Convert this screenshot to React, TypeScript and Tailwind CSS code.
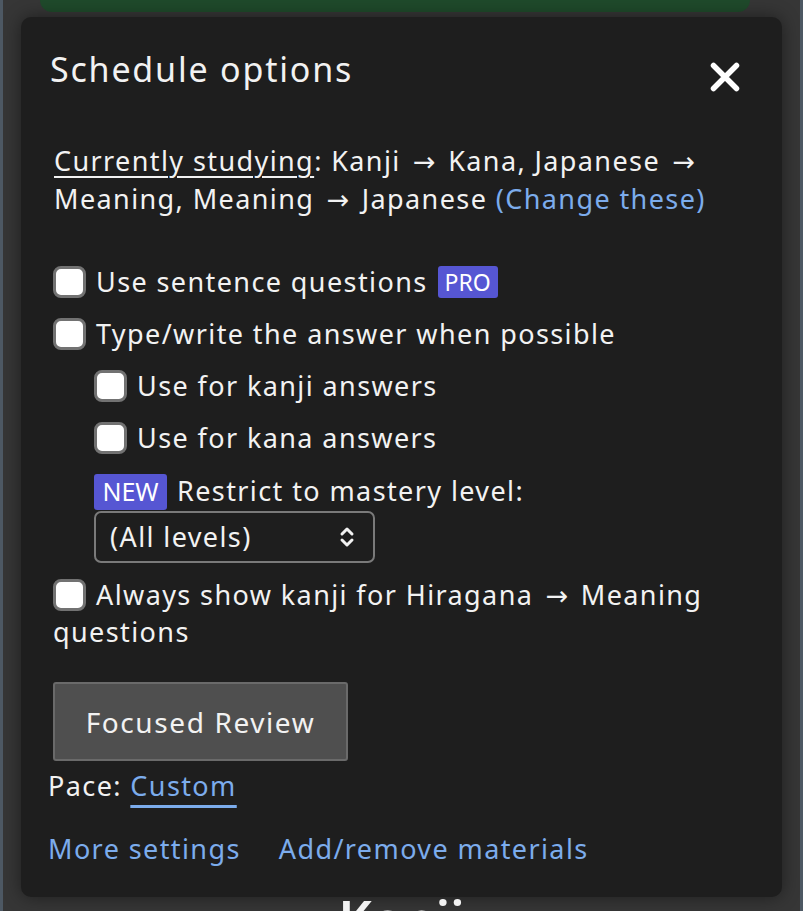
import React from 'react';
import { ChevronsUpDown } from 'lucide-react';

const font = { fontFamily: '"Noto Sans", "Open Sans", sans-serif' };

const Arrow: React.FC = () => <span className="font-['DejaVu_Sans'] tracking-normal mx-[4px]">→</span>;

const Box: React.FC = () => (
  <span className="inline-block w-[33px] h-[32px] shrink-0 rounded-[8px] border-[3px] border-[#727272] bg-white" />
);

const Check: React.FC<{ label: React.ReactNode; nested?: boolean }> = ({ label, nested }) => (
  <label className={`flex items-center h-[52px] gap-[10px] ${nested ? 'pl-[41px]' : ''}`}>
    <Box />
    <span>{label}</span>
  </label>
);

const Badge: React.FC<{ children: React.ReactNode; className?: string }> = ({ children, className }) => (
  <span
    className={`inline-flex items-center justify-center bg-[#5656d3] text-white rounded-[3px] tracking-normal ${className ?? ''}`}
  >
    {children}
  </span>
);

export default function App() {
  return (
    <div
      style={font}
      className="w-[803px] h-[911px] overflow-hidden bg-[#363636] border-l-[3px] border-r-[3px] border-[#4d5863] flex flex-col text-[#f2f2f2] text-[27px] tracking-[1.4px]"
    >
      <div className="h-[12px] ml-[37px] mr-[50px] rounded-b-[14px] bg-[#1f4a2b] shrink-0" />
      <div className="mt-[5px] mx-[18px] h-[880px] shrink-0 rounded-[10px] bg-[#1e1e1e] shadow-[0_0_18px_rgba(0,0,0,0.45)] pl-[27px] pr-[30px] pt-[30px]">
        <div className="flex items-center justify-between h-[44px] ml-[2px]">
          <h2 className="text-[34px] leading-[44px] font-normal tracking-[1.8px]">Schedule options</h2>
          <svg width="30" height="30" viewBox="0 0 30 30" className="mr-[12px] mt-[16px]">
            <path d="M3.5 3.5 L26.5 26.5 M26.5 3.5 L3.5 26.5" stroke="white" strokeWidth="5.5" strokeLinecap="round" />
          </svg>
        </div>

        <div className="mt-[51px] ml-[6px] leading-[37px]">
          <div>
            <span className="underline underline-offset-[5px] decoration-[2px]">Currently studying</span>: Kanji <Arrow /> Kana, Japanese <Arrow />
          </div>
          <div>
            Meaning, Meaning <Arrow /> Japanese <span className="text-[#7cacec]">(Change these)</span>
          </div>
        </div>

        <div className="mt-[38px] ml-[5px]">
          <Check
            label={
              <span className="flex items-center gap-[10px]">
                Use sentence questions
                <Badge className="w-[60px] h-[32px] text-[23px]">PRO</Badge>
              </span>
            }
          />
          <Check label="Type/write the answer when possible" />
          <Check nested label="Use for kanji answers" />
          <Check nested label="Use for kana answers" />

          <div className="pl-[41px] mt-[9px] flex items-center gap-[10px] h-[37px]">
            <Badge className="w-[73px] h-[36px] text-[25px]">NEW</Badge>
            <span>Restrict to mastery level:</span>
          </div>
          <div className="pl-[41px] mt-[1px]">
            <div className="w-[281px] h-[52px] rounded-[7px] border-2 border-[#7a7a7a] flex items-center justify-between pl-[14px] pr-[14px]">
              <span>(All levels)</span>
              <ChevronsUpDown size={24} strokeWidth={3} color="#f2f2f2" />
            </div>
          </div>

          <div className="mt-[13px] leading-[37px]">
            <div className="flex items-center gap-[10px] h-[37px]">
              <Box />
              <span>
                Always show kanji for Hiragana <Arrow /> Meaning
              </span>
            </div>
            <div>questions</div>
          </div>
        </div>

        <button className="mt-[32px] ml-[5px] w-[295px] h-[79px] bg-[#4f4f4f] border-2 border-[#6a6a6a] rounded-[3px] text-[28px] text-[#f2f2f2] tracking-[1.6px]">
          Focused Review
        </button>

        <p className="mt-[6px] leading-[37px]">
          Pace:{' '}
          <span className="text-[#7cacec] underline underline-offset-[9px] decoration-[3px]">Custom</span>
        </p>

        <div className="mt-[26px] flex gap-[38px] leading-[37px] text-[#7cacec]">
          <span>More settings</span>
          <span>Add/remove materials</span>
        </div>
      </div>
      <div className="text-center text-[52px] leading-none mt-[-4px] font-semibold tracking-normal">Kanji</div>
    </div>
  );
}
